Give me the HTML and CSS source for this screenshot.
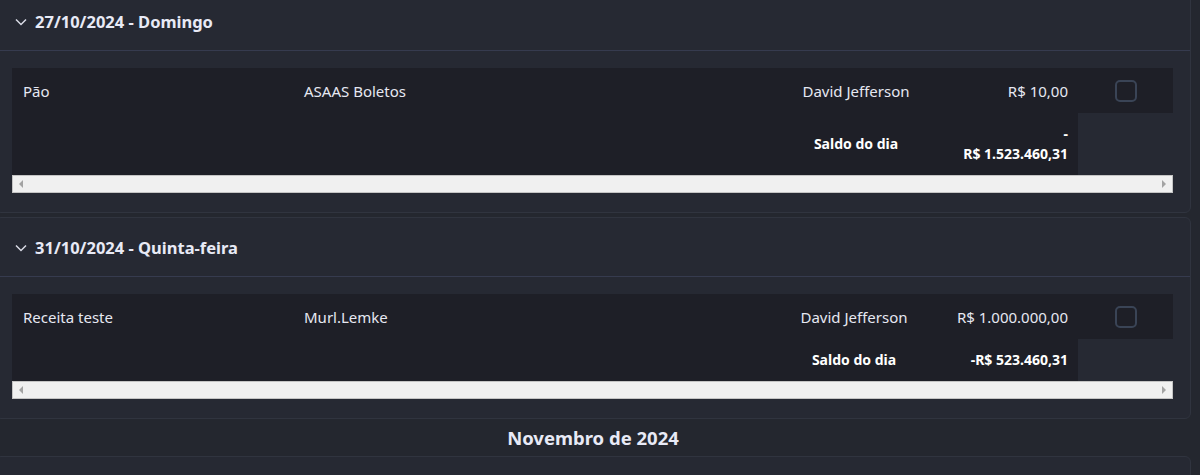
FILE: index.html
```html
<!DOCTYPE html>
<html lang="pt-BR">
<head>
<meta charset="utf-8">
<title>Lançamentos</title>
<link rel="stylesheet" href="styles.css">
</head>
<body>
<div class="list">
  <section class="card">
    <header class="card-head">
      <svg class="chev" viewBox="0 0 12 8" width="12" height="8"><path d="M1 1.5 L6 6.5 L11 1.5" fill="none" stroke="currentColor" stroke-width="1.5"/></svg>
      <span>27/10/2024 - Domingo</span>
    </header>
    <div class="card-body">
      <table class="grid">
        <colgroup><col class="c1"><col class="c2"><col class="c3"><col class="c4"><col class="c5"></colgroup>
        <tr class="row">
          <td>Pão</td>
          <td>ASAAS Boletos</td>
          <td class="center">David Jefferson</td>
          <td class="right">R$ 10,00</td>
          <td class="center"><span class="check"></span></td>
        </tr>
        <tr class="sum">
          <td></td>
          <td></td>
          <td class="center">Saldo do dia</td>
          <td class="right">-<br>R$ 1.523.460,31</td>
        </tr>
      </table>
      <div class="hscroll"><span class="arr left"></span><span class="arr right"></span></div>
    </div>
  </section>
  <section class="card">
    <header class="card-head">
      <svg class="chev" viewBox="0 0 12 8" width="12" height="8"><path d="M1 1.5 L6 6.5 L11 1.5" fill="none" stroke="currentColor" stroke-width="1.5"/></svg>
      <span>31/10/2024 - Quinta-feira</span>
    </header>
    <div class="card-body">
      <table class="grid">
        <colgroup><col class="c1"><col class="c2"><col class="c3 wide-amount"><col class="c4 wide-amount"><col class="c5"></colgroup>
        <tr class="row">
          <td>Receita teste</td>
          <td>Murl.Lemke</td>
          <td class="center">David Jefferson</td>
          <td class="right">R$ 1.000.000,00</td>
          <td class="center"><span class="check"></span></td>
        </tr>
        <tr class="sum">
          <td></td>
          <td></td>
          <td class="center">Saldo do dia</td>
          <td class="right">-R$ 523.460,31</td>
        </tr>
      </table>
      <div class="hscroll"><span class="arr left"></span><span class="arr right"></span></div>
    </div>
  </section>
  <h2 class="month">Novembro de 2024</h2>
  <section class="card card-next"></section>
</div>
</body>
</html>
```
FILE: styles.css
```css
html, body {
  margin: 0;
  padding: 0;
  background: #24272f;
  overflow: hidden;
}
body {
  font-family: "Noto Sans", "Open Sans", sans-serif;
  font-size: 15px;
  color: #e6e8f2;
}
.list {
  margin: -9px 0 0 -5px;
  width: 1196px;
  display: flex;
  flex-direction: column;
  gap: 4px;
}
.card {
  background: #262933;
  border: 1px solid #30343f;
  border-radius: 6px;
}
.card-head {
  height: 58px;
  display: flex;
  align-items: center;
  gap: 8px;
  padding: 0 0 0 19px;
  border-bottom: 1px solid #363b4f;
  font-weight: 700;
  font-size: 16.5px;
  color: #e8eaf6;
}
.chev { color: #d8dae6; margin-top: 1px; }
.card-body {
  padding: 17px 17px 19px 16px;
}
.grid {
  width: 1161px;
  table-layout: fixed;
  border-collapse: collapse;
}
.c1 { width: 281px; }
.c2 { width: 467px; }
.c3 { width: 191px; }
.c4 { width: 127px; }
.c3.wide-amount { width: 187px; }
.c4.wide-amount { width: 131px; }
.c5 { width: 95px; }
.grid td {
  padding: 0 10px 0 11px;
  line-height: 20px;
  white-space: nowrap;
  vertical-align: middle;
}
.row td {
  background: #1e1f27;
  height: 45px;
}
.sum td {
  background: #1e1f27;
  padding-top: 11px;
  padding-bottom: 11px;
  font-weight: 700;
  font-size: 14px;
  color: #ffffff;
}
.grid td.center { text-align: center; }
.grid td.right { text-align: right; padding-left: 4px; padding-right: 10px; }
.check {
  display: inline-block;
  width: 18px;
  height: 18px;
  border: 2px solid #3a4456;
  border-radius: 5px;
  vertical-align: middle;
}
.hscroll {
  position: relative;
  width: 1159px;
  height: 16px;
  background: #f0f0f0;
  border: 1px solid #c4c4c4;
}
.arr {
  position: absolute;
  top: 4px;
  width: 0;
  height: 0;
  border-top: 4px solid transparent;
  border-bottom: 4px solid transparent;
}
.arr.left { left: 6px; border-right: 4px solid #a3a3a3; }
.arr.right { right: 6px; border-left: 4px solid #a3a3a3; }
.month {
  margin: -4px 0;
  height: 37px;
  display: flex;
  align-items: center;
  justify-content: center;
  font-size: 18.5px;
  font-weight: 700;
  color: #e8eaf6;
}
.card-next { height: 40px; }
```
